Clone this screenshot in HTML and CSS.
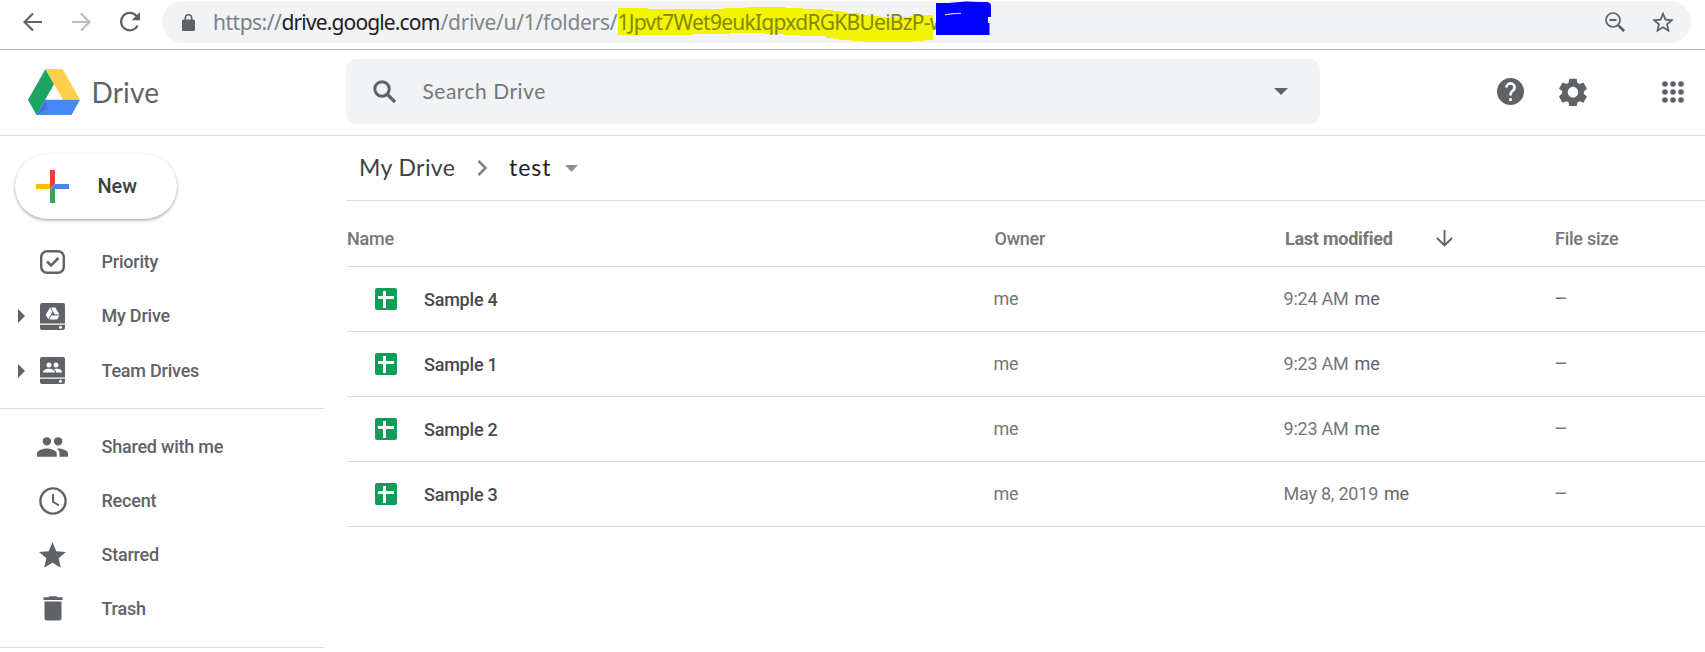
FILE: index.html
```html
<!DOCTYPE html>
<html lang="en">
<head>
<meta charset="utf-8">
<title>test - Google Drive</title>
<link rel="stylesheet" href="styles.css">
</head>
<body>
<div class="browser-bar">
  <div class="nav-buttons">
    <svg width="20" height="20" viewBox="0 0 20 20" class="stroke"><path d="M19 10H2M10 1.5 1.5 10l8.500 8.500"/></svg>
    <svg width="20" height="20" viewBox="0 0 20 20" class="stroke pale"><path d="M1 10h17M10 1.500 18.500 10 10 18.500"/></svg>
    <svg width="22" height="22" viewBox="0 0 22 22" class="stroke"><path d="M18.600 14.500A8.700 8.700 0 1 1 17.500 5"/><path class="solid" d="M21 1v8.300h-8.300z"/></svg>
  </div>
  <div class="omnibox">
    <svg class="lock" width="13" height="17" viewBox="0 0 13 17"><path d="M3.300 7V4a3.200 3.200 0 0 1 6.400 0v3" fill="none" stroke="#5f6368" stroke-width="1.600"/><rect y="5.500" width="13" height="11.500" rx="1.500" fill="#5f6368"/></svg>
    <div class="url"><span class="scheme">https://</span><span class="host">drive.google.com</span><span class="path">/drive/u/1/folders/</span><span class="folder-id">1Jpvt7Wet9eukIqpxdRGKBUeiBzP-w</span>
      <svg class="marker" width="390" height="43" viewBox="0 0 390 43"><path fill="#f3f500" d="M0 8h30v1h75V8h22V7h41v1h17v1h20v1h10v1h9v1h5v1h12v2h10v1h12v1h28v-1h10v-1h14v-1v26h-9v1h-11v1h-50v-1h-12v-1h-12v-1h-5v-1h-8v-2h-26v-1h-16v-1h-20v-1h-34v1H75v1H0z"/></svg>
      <svg class="redaction" width="60" height="40" viewBox="0 0 60 40"><path fill="#00f" d="M1 3h12l18-1.500 14 .500h7q4 .500 4 4V17h-3v6h1.500v12H1z"/><path d="M10 14.800q8-1.800 16-1.500-8 .300-16 1.500z" stroke="#dce1ff" stroke-width=".7" fill="#dce1ff"/></svg>
    </div>
    <svg class="zoom-out" width="20" height="20" viewBox="0 0 20 20"><circle cx="8" cy="8" r="7" fill="none" stroke="#5f6368" stroke-width="1.700"/><path d="M4.500 8h7M13 13l6 6" fill="none" stroke="#5f6368" stroke-width="1.800"/><path d="m14 14 5 5" stroke="#5f6368" stroke-width="2.600"/></svg>
    <svg class="bookmark" width="22" height="22" viewBox="2 1.500 20 20"><path fill="#5f6368" d="m22 9.240-7.190-.620L12 2 9.190 8.630 2 9.240l5.460 4.730L5.820 21 12 17.270 18.180 21l-1.630-7.030zM12 15.400l-3.760 2.270 1-4.280-3.320-2.880 4.380-.380L12 6.100l1.710 4.040 4.380.380-3.320 2.880 1 4.280z"/></svg>
  </div>
</div>

<header class="app-header">
  <a class="brand">
    <svg width="52" height="46" viewBox="0 0 52 46">
      <path fill="#1da362" d="M17.500 0 0 30.700 8.500 46 26 15.300z"/>
      <path fill="#ffd04b" d="M17.500 0h17.200L52 30.700H35z"/>
      <path fill="#4688f4" d="M17.300 30.700H52L43.500 46h-35z"/>
      <path fill="#3f78da" d="M17.300 30.700 8.500 46l11.500-6z"/>
    </svg>
    <span class="brand-name">Drive</span>
  </a>
  <div class="search">
    <svg width="24" height="24" viewBox="0 0 24 24"><circle cx="9" cy="9" r="7.200" fill="none" stroke="#5f6368" stroke-width="3"/><path d="m14 14 8 8" stroke="#5f6368" stroke-width="3.200"/></svg>
    <span class="search-label">Search Drive</span>
    <svg class="caret" width="14" height="7" viewBox="0 0 14 7"><path fill="#5f6368" d="M0 0h14L7 7z"/></svg>
  </div>
  <div class="header-tools">
    <svg width="27" height="27" viewBox="2 2 20 20"><path fill="#5f6368" d="M12 2a10 10 0 1 0 0 20 10 10 0 0 0 0-20zm1 17h-2v-2h2zm2.070-7.750-.900.920C13.450 12.900 13 13.500 13 15h-2v-.500c0-1.100.450-2.100 1.170-2.830l1.240-1.260c.370-.360.590-.860.590-1.410a2 2 0 0 0-4 0H8a4 4 0 0 1 8 0c0 .880-.360 1.680-.930 2.250z"/></svg>
    <svg width="28" height="28" viewBox="1.700 1.700 20.600 20.600"><path fill="#5f6368" fill-rule="evenodd" d="M9.300 2.200h5.400l.5 3 1.700 1 2.800-1.100 2.600 4.600-2.300 1.900v1.800l2.300 1.900-2.600 4.600-2.800-1.100-1.700 1-.5 3H9.300l-.5-3-1.700-1-2.800 1.100-2.600-4.600L4 13V11.200L1.700 9.700l2.600-4.600 2.800 1.100 1.700-1zM12 8.200a3.900 3.900 0 1 0 0 7.800 3.900 3.900 0 0 0 0-7.800z"/></svg>
    <svg class="apps" width="22" height="22" viewBox="0 0 22 22" fill="#5f6368"><circle cx="3" cy="3" r="2.800"/><circle cx="11" cy="3" r="2.800"/><circle cx="19" cy="3" r="2.800"/><circle cx="3" cy="11" r="2.800"/><circle cx="11" cy="11" r="2.800"/><circle cx="19" cy="11" r="2.800"/><circle cx="3" cy="19" r="2.800"/><circle cx="11" cy="19" r="2.800"/><circle cx="19" cy="19" r="2.800"/></svg>
  </div>
</header>

<div class="workspace">
  <nav class="sidebar">
    <div class="new-button">
      <svg width="33" height="33" viewBox="0 0 33 33"><path fill="#fbbc04" d="M0 14h14v5H0z"/><path fill="#ea4335" d="M14 0h5v14l-5 5z"/><path fill="#4285f4" d="M19 14h14v5H14z"/><path fill="#34a853" d="M14 19h5v14h-5z"/></svg>
      <span>New</span>
    </div>
    <ul class="nav-group">
      <li><span class="expander"></span><span class="icon"><svg width="25" height="24" viewBox="0 0 25 24" fill="none" stroke="#5f6368"><rect x="1.200" y="1.200" width="22.600" height="21.600" rx="6" stroke-width="2.400"/><path d="m7 11.500 4 4 7.500-7.500" stroke-width="2.500"/></svg></span><span class="label">Priority</span></li>
      <li><span class="expander open"></span><span class="icon"><svg width="25" height="27" viewBox="0 0 25 27"><path fill="#5f6368" d="M2 0h21q2 0 2 2v18.500H0V2q0-2 2-2zM0 21.700h25V25q0 2-2 2H2q-2 0-2-2z"/><g fill="#fff"><circle cx="20.500" cy="24.300" r="1.500"/><path d="m10 4.500 2.600 4.300-4.200 7.400-2.700-4.200zM11 4.500h4.300l4.100 7h-4.600zM11.500 12.500h8l-2.400 4H9.400z"/></g></svg></span><span class="label">My Drive</span></li>
      <li><span class="expander open"></span><span class="icon"><svg width="25" height="27" viewBox="0 0 25 27"><path fill="#5f6368" d="M2 0h21q2 0 2 2v18.500H0V2q0-2 2-2zM0 21.700h25V25q0 2-2 2H2q-2 0-2-2z"/><g fill="#fff"><circle cx="20.500" cy="24.300" r="1.500"/><circle cx="9" cy="8" r="2.500"/><circle cx="16" cy="8" r="2.500"/><path d="M3 15.500c0-5 12-5 12 0zM16 15.500h6c0-3.500-4-4.200-8-3.500 1.500 1 2 2 2 3.500z"/></g></svg></span><span class="label">Team Drives</span></li>
    </ul>
    <ul class="nav-group">
      <li><span class="expander"></span><span class="icon"><svg width="31" height="20" viewBox="1 5 22 14"><path fill="#5f6368" d="M16 11a3 3 0 1 0 0-6 3 3 0 0 0 0 6zm-8 0a3 3 0 1 0 0-6 3 3 0 0 0 0 6zm0 2c-2.330 0-7 1.170-7 3.500V19h14v-2.500c0-2.330-4.670-3.500-7-3.500zm8 0c-.290 0-.620.020-.970.050 1.160.840 1.970 1.970 1.970 3.450V19h6v-2.500c0-2.330-4.670-3.500-7-3.500z"/></svg></span><span class="label">Shared with me</span></li>
      <li><span class="expander"></span><span class="icon"><svg width="28" height="28" viewBox="0 0 28 28" fill="none" stroke="#5f6368" stroke-width="2.400"><circle cx="14" cy="14" r="12.600"/><path d="M14 7v7.800l6 3.500" stroke-width="2"/></svg></span><span class="label">Recent</span></li>
      <li><span class="expander"></span><span class="icon"><svg width="27" height="26" viewBox="2 2 20 19"><path fill="#5f6368" d="M12 17.270 18.180 21l-1.640-7.030L22 9.240l-7.190-.610L12 2 9.190 8.630 2 9.240l5.460 4.730L5.820 21z"/></svg></span><span class="label">Starred</span></li>
      <li><span class="expander"></span><span class="icon"><svg width="20" height="25" viewBox="0 0 20 25"><path fill="#5f6368" d="M1.500 5.500h17V22q0 2.500-2.500 2.500H4Q1.500 24.500 1.500 22zM.500 1.300h5L6.500.300h7l1 1h5V4H.500z"/></svg></span><span class="label">Trash</span></li>
    </ul>
  </nav>

  <main class="content">
    <div class="breadcrumbs">
      <span class="crumb parent">My Drive</span>
      <svg class="chevron" width="11" height="16" viewBox="0 0 11 16"><path d="m1.500 1 7 7-7 7" fill="none" stroke="#80868b" stroke-width="2.600"/></svg>
      <span class="crumb current">test</span>
      <svg class="crumb-caret" width="13" height="7" viewBox="0 0 13 7"><path fill="#909396" d="M0 0h13L6.500 7z"/></svg>
    </div>
    <div class="file-list">
      <div class="row head">
        <span class="h-name">Name</span><span class="h-owner">Owner</span>
        <span class="sorted"><span class="h-mod">Last modified</span><svg width="17" height="17" viewBox="0 0 17 17"><path d="M8.500 0v15M1 8l7.500 7.500L16 8" fill="none" stroke="#5f6368" stroke-width="1.900"/></svg></span>
        <span class="h-size">File size</span>
      </div>
      <div class="row"><span class="file"><i class="sheet"></i><span class="file-name">Sample 4</span></span><span class="owner">me</span><span class="modified"><span class="time">9:24 AM</span><span class="by">me</span></span><span class="size">–</span></div>
      <div class="row"><span class="file"><i class="sheet"></i><span class="file-name">Sample 1</span></span><span class="owner">me</span><span class="modified"><span class="time">9:23 AM</span><span class="by">me</span></span><span class="size">–</span></div>
      <div class="row"><span class="file"><i class="sheet"></i><span class="file-name">Sample 2</span></span><span class="owner">me</span><span class="modified"><span class="time">9:23 AM</span><span class="by">me</span></span><span class="size">–</span></div>
      <div class="row"><span class="file"><i class="sheet"></i><span class="file-name">Sample 3</span></span><span class="owner">me</span><span class="modified"><span class="time">May 8, 2019</span><span class="by">me</span></span><span class="size">–</span></div>
    </div>
  </main>
</div>
</body>
</html>
```
FILE: styles.css
```css
* { box-sizing: border-box; }
body { margin: 0; height: 652px; overflow: hidden; background: #fff; color: #5f6368; font-family: Roboto, "Liberation Sans", sans-serif; font-size: 18px; display: flex; flex-direction: column; }
svg { display: block; flex: none; }
ul { list-style: none; margin: 0; padding: 0; }
span { white-space: nowrap; }

.browser-bar { flex: none; height: 50px; border-bottom: 1px solid #b2b3b5; display: flex; padding: 1px 14px 0 23px; }
.nav-buttons { width: 139px; height: 41px; display: flex; align-items: center; gap: 28px; }
.stroke { fill: none; stroke: #5f6368; stroke-width: 2.2; }
.stroke.pale { stroke: #babcbe; }
.stroke .solid { fill: #5f6368; stroke: none; }
.omnibox { flex: 1; height: 42px; border-radius: 21px; background: #f1f3f4; display: flex; align-items: center; padding: 0 17px 0 20px; }
.lock { margin: 1px 18px 0 0; }
.url { position: relative; flex: 1; height: 42px; display: flex; font: 21px/43px "Noto Sans", sans-serif; color: #80868b; }
.url span { position: relative; z-index: 1; flex: none; }
.scheme { width: 68.500px; color: #7b8085; letter-spacing: -0.500px; }
.host { width: 159px; color: #202124; letter-spacing: -0.860px; }
.path { width: 177px; letter-spacing: -0.300px; }
.folder-id { width: 325px; overflow: hidden; color: #85870c; letter-spacing: -0.740px; }
.marker { position: absolute; left: 405px; top: -1px; }
.redaction { position: absolute; left: 722px; top: -1px; z-index: 2; }
.zoom-out { margin-right: 27px; }

.app-header { flex: none; height: 86px; border-bottom: 1px solid #dadce0; display: flex; padding-top: 9px; }
.brand { width: 346px; height: 65px; padding-left: 28px; display: flex; align-items: center; gap: 11.500px; }
.brand-name { font: 28px/40px Lato, sans-serif; letter-spacing: .2px; }
.search { width: 974px; height: 65px; border-radius: 10px; background: #f1f3f4; display: flex; align-items: center; padding: 0 32px 0 27px; }
.search-label { flex: 1; margin: -2px 0 0 25.500px; font: 21px/30px Lato, sans-serif; letter-spacing: .5px; color: #757779; }
.header-tools { height: 65px; margin-left: auto; padding-right: 21px; display: flex; align-items: center; }
.header-tools svg:nth-child(2) { margin: 0 75px 0 35px; }

.workspace { flex: 1; display: flex; }
.sidebar { width: 324px; flex: none; padding-top: 18px; }
.new-button { width: 162px; height: 65px; margin: 0 0 16px 15px; border-radius: 33px; box-shadow: 0 1px 3px rgba(60,64,67,.35), 0 2px 3px rgba(60,64,67,.16); display: flex; align-items: center; padding-left: 21px; gap: 28.500px; color: #3c4043; font-size: 20px; font-weight: 500; letter-spacing: -.1px; }
.new-button span { margin-top: -1px; }
.nav-group { border-bottom: 1px solid #dadce0; padding-bottom: 10px; }
.nav-group + .nav-group { padding: 11px 0; }
.nav-group li { height: 54.300px; display: flex; align-items: center; }
.nav-group + .nav-group li { height: 54px; }
.expander { width: 36px; height: 14px; }
.expander.open::before { content: ""; display: block; margin-left: 18px; border: 7px solid transparent; border-left-color: #5f6368; border-right: 0; }
.icon { width: 33px; display: flex; justify-content: center; }
.label { margin: -1px 0 0 32.500px; font-weight: 500; letter-spacing: -.22px; }
.nav-group + .nav-group .label { margin-top: 0; }

.content { flex: 1; padding-left: 22px; }
.breadcrumbs { height: 65px; border-bottom: 1px solid #dadce0; display: flex; align-items: center; padding: 0 0 1px 13px; font: 23px/30px Lato, sans-serif; letter-spacing: .4px; color: #3c4043; }
.crumb { margin-top: -2px; }
.crumb.parent { width: 118px; }
.crumb.current { margin-left: 21px; width: 56px; color: #202124; letter-spacing: 1px; }
.crumb-caret { margin-top: 2px; }
.file-list { padding-left: 1px; }
.row { height: 65px; border-bottom: 1px solid #dadce0; display: grid; grid-template-columns: 646.500px 290px 271.500px 1fr; align-items: center; color: #757779; letter-spacing: -.22px; padding-bottom: 2px; }
.row.head { height: 66px; padding: 9px 0 0; font-weight: 500; letter-spacing: -.25px; }
.h-owner { padding-left: 1px; }
.sorted { display: flex; align-items: center; gap: 43px; padding-left: 1.500px; }
.h-mod { font-weight: 700; }
.file { display: flex; align-items: center; padding-left: 28px; gap: 27px; padding-top: 2px; }
.sheet { width: 22px; height: 22px; border-radius: 2px; background: linear-gradient(#fff, #fff) 3px 8px / 16px 3px no-repeat, linear-gradient(#fff, #fff) 8px 3px / 3px 17px no-repeat, #0f9d58; }
.file-name { color: #484a4c; font-weight: 500; }
.modified { display: flex; gap: 6px; }
.by { color: #5f6368; }
.size { font-size: 21px; line-height: 20px; margin: 2px 0 0 -1px; }
```
